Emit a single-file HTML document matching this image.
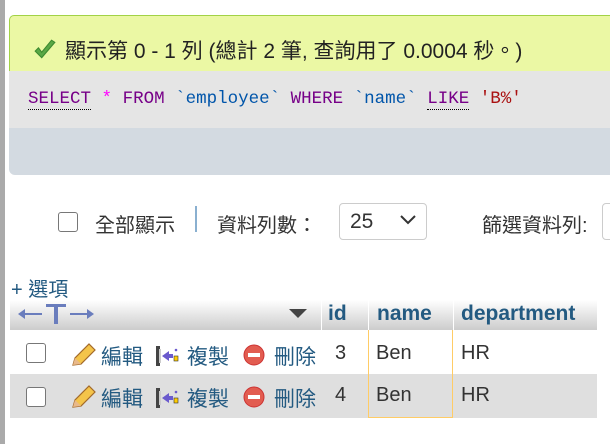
<!DOCTYPE html>
<html><head><meta charset="utf-8"><style>
body{margin:0;width:610px;height:444px;background:#fff;position:relative;overflow:hidden;font-family:"Liberation Sans","Noto Sans CJK TC",sans-serif;}
.lb{position:absolute;left:0;top:0;width:5px;height:444px;background:#aaa}
.a{position:absolute;white-space:nowrap}
.msg{left:9px;top:15px;width:620px;height:56px;background:#ebf8a4;border:1px solid #a2d246;border-right:none;border-bottom:none;border-radius:5px 0 0 0}
.sql{left:9px;top:71px;width:620px;height:57px;background:#e5e5e5}
.tb{left:9px;top:128px;width:620px;height:47px;background:#d3dae1;border-radius:0 0 0 6px}
.code{font-family:"Liberation Mono",monospace;font-size:17.5px;left:28px;top:89px;white-space:pre}
.cb{width:18px;height:18px;border:1.5px solid #777;border-radius:3px;background:#fff;box-sizing:border-box}
.t{font-size:20px;color:#333}
.hd{left:10px;top:300px;width:587px;height:30px;background:linear-gradient(#fff,#ccc)}
.row2{left:10px;top:374px;width:587px;height:44px;background:#dfdfdf}
.h{font-weight:bold;color:#235a81;font-size:21px;top:302px}
.c{font-size:20px;color:#333}
.lk{font-size:21px;color:#235a81}
</style></head><body>
<div class="lb"></div>
<div class="a msg"></div>
<div class="a sql"></div>
<div class="a tb"></div>
<svg class="a" style="left:33px;top:39px" width="24" height="22" viewBox="0 0 22 20"><path d="M2 11 L8 17 L20 3 L17 1 L8 12 L5 8 Z" fill="#5aa845" stroke="#3d8a30" stroke-width="1"/></svg>
<div class="a t" style="left:65px;top:35px;font-size:21px;color:#222">顯示第 0 - 1 列 (總計 2 筆, 查詢用了 0.0004 秒。)</div>
<div class="a code"><span style="color:#708;border-bottom:1px dotted #000">SELECT</span> <span style="color:#f0f">*</span> <span style="color:#708">FROM</span> <span style="color:#05a">`employee`</span> <span style="color:#708">WHERE</span> <span style="color:#05a">`name`</span> <span style="color:#708;border-bottom:1px dotted #000">LIKE</span> <span style="color:#a11">'B%'</span></div>
<div class="a cb" style="left:58px;top:212px;width:20px;height:20px"></div>
<div class="a t" style="left:95px;top:209px">全部顯示</div>
<div class="a" style="left:195px;top:206px;width:2px;height:26px;background:#8ab0d0"></div>
<div class="a t" style="left:217px;top:209px">資料列數：</div>
<div class="a" style="left:339px;top:203px;width:88px;height:37px;border:1px solid #ccc;border-radius:4px;box-sizing:border-box"></div>
<div class="a t" style="left:350px;top:210px;font-size:21px">25</div>
<svg class="a" style="left:400px;top:215px" width="16" height="10"><path d="M1 1 L8 8 L15 1" fill="none" stroke="#333" stroke-width="2"/></svg>
<div class="a t" style="left:482px;top:209px">篩選資料列:</div>
<div class="a" style="left:602px;top:203px;width:20px;height:37px;border:1px solid #ccc;border-radius:4px;box-sizing:border-box"></div>
<div class="a" style="left:11px;top:273px;font-size:20px;color:#235a81">+ 選項</div>
<div class="a hd"></div>
<div class="a" style="left:321px;top:300px;width:1px;height:30px;background:#fff"></div>
<div class="a" style="left:368px;top:300px;width:1px;height:30px;background:#fff"></div>
<div class="a" style="left:453px;top:300px;width:1px;height:30px;background:#fff"></div>
<svg class="a" style="left:18px;top:303px" width="76" height="22"><g fill="#6a7dbd"><rect x="28" y="1" width="20" height="3"/><rect x="36" y="1" width="4" height="20"/><rect x="4" y="10" width="20" height="2"/><path d="M0 11 L7 6 V16Z"/><rect x="52" y="10" width="20" height="2"/><path d="M76 11 L69 6 V16Z"/></g></svg>
<svg class="a" style="left:289px;top:309px" width="18" height="10"><path d="M0 0 H18 L9 9 Z" fill="#444"/></svg>
<div class="a h" style="left:328px">id</div>
<div class="a h" style="left:377px">name</div>
<div class="a h" style="left:461px">department</div>
<div class="a row2"></div>
<div class="a" style="left:368px;top:330px;width:85px;height:88px;border-left:1px solid #fc6;border-right:1px solid #fc6;border-bottom:1px solid #fc6;box-sizing:border-box"></div>
<div class="a cb" style="left:26px;top:343px;width:20px;height:20px"></div>
<div class="a cb" style="left:26px;top:387px;width:20px;height:20px"></div>
<div style="position:absolute;left:70px;top:341px">
<svg class="a" style="left:0;top:2px" width="26" height="24"><path d="M3 22 L5 15 L19 1 L25 7 L11 21 Z" fill="#f4c44a" stroke="#a36a2a" stroke-width="1.2"/><path d="M3 22 L5 15 L11 21Z" fill="#e9b98a"/></svg>
<div class="a lk" style="left:31px;top:0">編輯</div>
<svg class="a" style="left:86px;top:5px" width="24" height="20"><rect x="0" y="0" width="4" height="20" fill="#444"/><rect x="3" y="3" width="2" height="14" fill="#ccc"/><path d="M6 10 L13 5 V8 H17 V12 H13 V15 Z" fill="#6a5acd"/><rect x="18" y="10" width="4" height="5" fill="#fc0" stroke="#333" stroke-width=".6"/><circle cx="20" cy="4" r="1.3" fill="#6a5acd"/></svg>
<div class="a lk" style="left:117px;top:0">複製</div>
<svg class="a" style="left:173px;top:3px" width="22" height="22"><circle cx="11" cy="11" r="10" fill="#e25c50" stroke="#c33" /><rect x="5" y="9" width="12" height="4" fill="#fff"/></svg>
<div class="a lk" style="left:204px;top:0">刪除</div>
</div>
<div style="position:absolute;left:70px;top:383px">
<svg class="a" style="left:0;top:2px" width="26" height="24"><path d="M3 22 L5 15 L19 1 L25 7 L11 21 Z" fill="#f4c44a" stroke="#a36a2a" stroke-width="1.2"/><path d="M3 22 L5 15 L11 21Z" fill="#e9b98a"/></svg>
<div class="a lk" style="left:31px;top:0">編輯</div>
<svg class="a" style="left:86px;top:5px" width="24" height="20"><rect x="0" y="0" width="4" height="20" fill="#444"/><rect x="3" y="3" width="2" height="14" fill="#ccc"/><path d="M6 10 L13 5 V8 H17 V12 H13 V15 Z" fill="#6a5acd"/><rect x="18" y="10" width="4" height="5" fill="#fc0" stroke="#333" stroke-width=".6"/><circle cx="20" cy="4" r="1.3" fill="#6a5acd"/></svg>
<div class="a lk" style="left:117px;top:0">複製</div>
<svg class="a" style="left:173px;top:3px" width="22" height="22"><circle cx="11" cy="11" r="10" fill="#e25c50" stroke="#c33" /><rect x="5" y="9" width="12" height="4" fill="#fff"/></svg>
<div class="a lk" style="left:204px;top:0">刪除</div>
</div>
<div class="a c" style="left:335px;top:342px">3</div>
<div class="a c" style="left:376px;top:342px">Ben</div>
<div class="a c" style="left:461px;top:342px">HR</div>
<div class="a c" style="left:335px;top:384px">4</div>
<div class="a c" style="left:376px;top:384px">Ben</div>
<div class="a c" style="left:461px;top:384px">HR</div>
</body></html>
